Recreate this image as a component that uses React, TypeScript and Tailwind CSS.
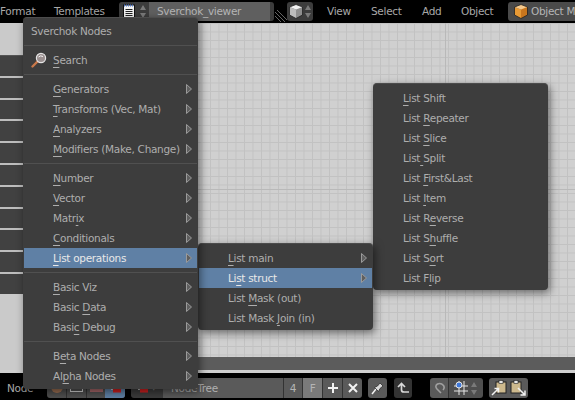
import type { ReactNode } from "react";

const font = "font-['DejaVu_Sans',sans-serif] text-[10.5px] leading-none tracking-[-0.3px]";

type Item = { label: string; key: number; arrow?: boolean; active?: boolean };
type Entry = Item | "sep";

const nodeMenu: Entry[] = [
  "sep",
  { label: "Generators", key: 0, arrow: true },
  { label: "Transforms (Vec, Mat)", key: 0, arrow: true },
  { label: "Analyzers", key: 0, arrow: true },
  { label: "Modifiers (Make, Change)", key: 0, arrow: true },
  "sep",
  { label: "Number", key: 0, arrow: true },
  { label: "Vector", key: 0, arrow: true },
  { label: "Matrix", key: 4, arrow: true },
  { label: "Conditionals", key: 0, arrow: true },
  { label: "List operations", key: 0, arrow: true, active: true },
  "sep",
  { label: "Basic Viz", key: 0, arrow: true },
  { label: "Basic Data", key: 6, arrow: true },
  { label: "Basic Debug", key: 4, arrow: true },
  "sep",
  { label: "Beta Nodes", key: 1, arrow: true },
  { label: "Alpha Nodes", key: 2, arrow: true },
];

const listMenu: Entry[] = [
  { label: "List main", key: 0, arrow: true },
  { label: "List struct", key: 2, arrow: true, active: true },
  { label: "List Mask (out)", key: 5 },
  { label: "List Mask Join (in)", key: 10 },
];

const structMenu: Entry[] = [
  { label: "List Shift", key: 0 },
  { label: "List Repeater", key: 5 },
  { label: "List Slice", key: 5 },
  { label: "List Split", key: 4 },
  { label: "List First&Last", key: 5 },
  { label: "List Item", key: 5 },
  { label: "List Reverse", key: 6 },
  { label: "List Shuffle", key: 6 },
  { label: "List Sort", key: 6 },
  { label: "List Flip", key: 6 },
];

const stripRows = [0, 1, 2, 3, 4, 5, 6, 7, 8, 9];

const Arrow = () => (
  <svg width="6" height="10" viewBox="0 0 6 10" className="absolute right-[5px] top-[5px]">
    <path d="M0.5 0.5 L5.5 5 L0.5 9.5 Z" fill="#5f5f5f" stroke="#9a9a9a" strokeWidth="1" />
  </svg>
);

const Label = ({ item }: { item: Item }) => (
  <span className="whitespace-pre">
    {item.label.slice(0, item.key)}
    <span className="underline underline-offset-[3px]">{item.label[item.key]}</span>
    {item.label.slice(item.key + 1)}
  </span>
);

const Row = ({ item }: { item: Item }) => (
  <div
    className={`relative flex h-5 items-center pl-[29px] ${
      item.active ? "bg-[#5f80a5] text-[#e8e8e8]" : "text-[#aeaeae]"
    }`}
  >
    <Label item={item} />
    {item.arrow && <Arrow />}
  </div>
);

const Entries = ({ entries }: { entries: Entry[] }) => (
  <>
    {entries.map((entry, i) =>
      entry === "sep" ? (
        <div key={i} className="flex h-[9px] items-center">
          <div className="h-px w-full bg-[#505050]" />
        </div>
      ) : (
        <Row key={i} item={entry} />
      ),
    )}
  </>
);

const Menu = ({ className, children }: { className: string; children: ReactNode }) => (
  <div
    className={`absolute rounded-[4px] border-t border-[#4c4c4c] bg-[#3d3d3d] px-px shadow-[2px_3px_9px_rgba(0,0,0,0.5)] ${font} ${className}`}
  >
    {children}
  </div>
);

const NotepadIcon = () => (
  <svg width="12" height="15" viewBox="0 0 12 15" className="shrink-0">
    <rect x="0.5" y="1" width="11" height="13.5" fill="#f2f2f2" stroke="#111" />
    <path d="M1 1.5h10" stroke="#4d76c8" strokeWidth="2" strokeDasharray="1 1" />
    <path d="M2.5 5.5h7M2.5 7.5h7M2.5 9.5h7M2.5 11.5h7" stroke="#222" />
  </svg>
);

const UpDown = () => (
  <svg width="6" height="13" viewBox="0 0 6 13" className="shrink-0">
    <path d="M3 0 L6 5 H0 Z M3 13 L0 8 H6 Z" fill="#7a7a7a" />
  </svg>
);

const Cube = ({ front, side, top }: { front: string; side: string; top: string }) => (
  <svg width="14" height="15" viewBox="0 0 14 15" className="shrink-0">
    <path d="M7 0.5 L13.5 3 V11 L7 14.5 Z" fill={side} />
    <path d="M7 5.5 L0.5 3 V11 L7 14.5 Z" fill={front} />
    <path d="M7 0.5 L13.5 3 L7 5.5 L0.5 3 Z" fill={top} />
    <path d="M7 0.5 L13.5 3 V11 L7 14.5 L0.5 11 V3 Z" fill="none" stroke="#222" strokeWidth="0.8" />
  </svg>
);

const Magnifier = () => (
  <svg width="16" height="16" viewBox="0 0 16 16">
    <path d="M1.5 14.5 L7 9" stroke="#c9784a" strokeWidth="2.4" strokeLinecap="round" />
    <circle cx="10" cy="6" r="4.6" fill="#9a8f8f" stroke="#e4e4e4" strokeWidth="1.2" />
    <path d="M7.5 5 Q9.5 3 12 4.5" stroke="#f4f4f4" fill="none" />
  </svg>
);

const NodeIcon = () => (
  <svg width="13" height="10" viewBox="0 0 13 10">
    <path d="M1 3 H10 M10 3 Q8 6 2 6" stroke="#e6e6e6" strokeWidth="1.4" fill="none" />
    <rect x="4" y="6" width="8" height="3.5" fill="#d22020" />
    <rect x="0.5" y="1.5" width="4" height="3" fill="#2d4f9e" />
  </svg>
);

const Segment = ({ className, children }: { className: string; children?: ReactNode }) => (
  <div className={`flex h-5 items-center justify-center ${className}`}>{children}</div>
);

const App = () => (
  <div className={`relative flex h-[400px] w-[575px] flex-col overflow-hidden bg-black ${font}`}>
    {/* top header */}
    <div className="flex h-[23px] shrink-0 items-center bg-black text-[#a8a8a8] *:shrink-0">
      <span className="w-[54px]">Format</span>
      <span className="w-[65px]">Templates</span>
      <div className="flex h-[19px] w-[30px] items-center justify-center gap-[5px] rounded-l-[3px] bg-[#3c3c3c]">
        <NotepadIcon />
        <UpDown />
      </div>
      <div className="flex h-[19px] w-[121px] items-center bg-[#5f5f5f] pl-[8px] text-[#b5b5b5]">Sverchok_viewer</div>
      <div className="h-[19px] w-[4px] rounded-r-[3px] bg-[#3c3c3c]" />
      <svg width="12" height="12" viewBox="0 0 12 12" className="ml-px mt-[9px]">
        <path d="M0 2 L10 12 M0 6 L6 12 M2 0 L12 10" stroke="#666" />
      </svg>
      <div className="flex h-[19px] w-[26px] items-center justify-center gap-[2px] rounded-[3px] bg-[#3c3c3c]">
        <Cube front="#bdbdbd" side="#8f8f8f" top="#f2f2f2" />
        <UpDown />
      </div>
      <span className="ml-[14px] w-[44px]">View</span>
      <span className="w-[51px]">Select</span>
      <span className="w-[39px]">Add</span>
      <span className="w-[47px]">Object</span>
      <div className="flex h-[19px] w-[67px] items-center gap-[3px] overflow-hidden whitespace-pre rounded-l-[3px] bg-[#4a4a4a] pl-[6px] text-[#b5b5b5]">
        <Cube front="#e89a35" side="#c9761d" top="#f6c98c" />
        <span>Object Mode</span>
      </div>
    </div>

    {/* node canvas with the left strip */}
    <div className="flex min-h-0 grow">
      <div className="flex w-[23px] shrink-0 flex-col bg-[#cacaca]">
        <div className="h-[33px] shrink-0 border-b border-[#555]" />
        {stripRows.map((row) => (
          <div key={row} className="h-[21.8px] shrink-0 border-b-[2px] border-[#bdbdbd] bg-[#414141]" />
        ))}
        <div className="h-[20px] shrink-0 bg-[#414141]" />
      </div>
      <div className="flex grow flex-col">
        <div className="grow bg-[#d0d0d0] bg-[linear-gradient(#b9b9b9_1px,transparent_1px),linear-gradient(90deg,#b9b9b9_1px,transparent_1px),linear-gradient(#c2c2c2_1px,transparent_1px),linear-gradient(90deg,#c2c2c2_1px,transparent_1px)] bg-[size:340px_340px,340px_340px,8.5px_8.5px,8.5px_8.5px] bg-[position:0_166px,82px_0,0_0,0_0]" />
        <div className="h-[13px] shrink-0 bg-[#5c5c5c]" />
      </div>
    </div>
    <div className="h-[3px] shrink-0 bg-[#cfcfcf]" />

    {/* bottom header */}
    <div className="flex h-[27px] shrink-0 items-center bg-black pb-[2px] pt-[5px] text-[#a8a8a8] *:shrink-0">
      <span className="ml-[7px] w-[40px]">Node</span>
      <div className="flex h-5 w-[78px] overflow-hidden rounded-[3px] bg-[#4f4f4f]">
        <Segment className="w-[19px]">
          <span className="mt-[-2px] size-[12px] rounded-full bg-[#9b6f52]" />
        </Segment>
        <Segment className="w-[20px] border-l border-[#333]">
          <span className="h-[7px] w-[13px] border border-[#cfcfcf]" />
        </Segment>
        <Segment className="w-[19px] border-l border-[#333]">
          <span className="h-[8px] w-[13px] bg-[#a8686a]" />
        </Segment>
        <Segment className="w-[20px] bg-[#5f80a5]">
          <NodeIcon />
        </Segment>
      </div>
      <div className="ml-[6px] flex h-5 w-[32px] items-center gap-[2px] rounded-l-[3px] bg-[#3c3c3c] pl-[5px]">
        <NodeIcon />
        <span className="text-[7px] text-[#777]">▼</span>
      </div>
      <div className="flex h-5 w-[120px] items-center bg-[#5a5a5a] pl-[8px] text-[#b0b0b0]">NodeTree</div>
      <Segment className="w-[19px] border-l border-[#333] bg-[#5a5a5a] text-[#b5b5b5]">4</Segment>
      <Segment className="w-[20px] border-l border-[#333] bg-[#7a7a7a] text-[#b5b5b5]">F</Segment>
      <Segment className="w-[20px] border-l border-[#333] bg-[#5a5a5a]">
        <svg width="12" height="12" viewBox="0 0 12 12">
          <path d="M6 1v10M1 6h10" stroke="#f2f2f2" strokeWidth="2" />
        </svg>
      </Segment>
      <Segment className="w-[20px] rounded-r-[3px] border-l border-[#333] bg-[#5a5a5a]">
        <svg width="12" height="12" viewBox="0 0 12 12">
          <path d="M2 2l8 8M10 2l-8 8" stroke="#f2f2f2" strokeWidth="2" />
        </svg>
      </Segment>
      <Segment className="ml-[6px] w-[19px] rounded-[3px] bg-[#5a5a5a]">
        <svg width="14" height="14" viewBox="0 0 14 14">
          <path d="M1 13 L5 8" stroke="#f2f2f2" strokeWidth="1.5" />
          <path d="M3.5 6.5 L7.5 10.5 L9 7.5 L12 5 L9 2 L6.5 5 Z" fill="#d8d8d8" stroke="#222" strokeWidth="0.7" />
        </svg>
      </Segment>
      <Segment className="ml-[7px] w-[18px] rounded-[3px] bg-[#333]">
        <svg width="13" height="12" viewBox="0 0 13 12">
          <path d="M1 5 L4.5 1.5 L8 5 M4.5 2 V8 Q4.5 10 7 10 H12" stroke="#d8d8d8" strokeWidth="1.7" fill="none" />
        </svg>
      </Segment>
      <Segment className="ml-[18px] w-[18px] rounded-l-[3px] bg-[#5a5a5a]">
        <svg width="13" height="13" viewBox="0 0 13 13">
          <path d="M8 11 L4 7 Q1.5 4 4.5 2 Q8 0.5 10.5 3.5 Q12 6 10 8" stroke="#a0a0a0" strokeWidth="1.6" fill="none" />
        </svg>
      </Segment>
      <Segment className="w-[35px] justify-start gap-[3px] rounded-r-[3px] border-l border-[#333] bg-[#4f4f4f] pl-[5px]">
        <svg width="14" height="14" viewBox="0 0 14 14">
          <path d="M0 5h14M0 10h14M5 0v14M10 0v14" stroke="#e6e6e6" />
          <circle cx="5" cy="4" r="3" fill="#3f78d8" stroke="#e6e6e6" />
        </svg>
        <UpDown />
      </Segment>
      <div className="ml-[6px] flex h-5 w-[39px] items-center justify-center gap-[3px] rounded-[3px] bg-[#5a5a5a]">
        <svg width="16" height="16" viewBox="0 0 16 16">
          <rect x="5" y="2" width="10" height="11" fill="#cdb98d" stroke="#222" />
          <rect x="8" y="0.5" width="4" height="3" fill="#e6e6e6" stroke="#222" strokeWidth="0.6" />
          <path d="M1 15 L7 9 M3.5 8.5 H7.5 V12.5" stroke="#f2f2f2" strokeWidth="1.5" fill="none" />
        </svg>
        <svg width="16" height="16" viewBox="0 0 16 16">
          <rect x="1" y="2" width="10" height="11" fill="#cdb98d" stroke="#222" />
          <rect x="4" y="0.5" width="4" height="3" fill="#e6e6e6" stroke="#222" strokeWidth="0.6" />
          <path d="M8 8 L15 15 M15 10.5 V15 H10.5" stroke="#f2f2f2" strokeWidth="1.5" fill="none" />
        </svg>
      </div>
    </div>

    {/* popup menus */}
    <Menu className="left-[373px] top-[83px] w-[175px] pb-[2px] pt-[4px]">
      <Entries entries={structMenu} />
    </Menu>
    <Menu className="left-[198px] top-[243px] w-[175px] pb-[2px] pt-[4px]">
      <Entries entries={listMenu} />
    </Menu>
    <Menu className="left-[23px] top-[17px] w-[175px] pb-[3px] pt-[3px]">
      <div className="flex h-5 items-center pl-[7px] text-[#aeaeae]">Sverchok Nodes</div>
      <div className="flex h-[9px] items-center">
        <div className="h-px w-full bg-[#505050]" />
      </div>
      <div className="relative flex h-5 items-center pl-[29px] text-[#aeaeae]">
        <span className="absolute left-[7px] top-[2px]">
          <Magnifier />
        </span>
        <Label item={{ label: "Search", key: 0 }} />
      </div>
      <Entries entries={nodeMenu} />
    </Menu>
  </div>
);

export default App;
